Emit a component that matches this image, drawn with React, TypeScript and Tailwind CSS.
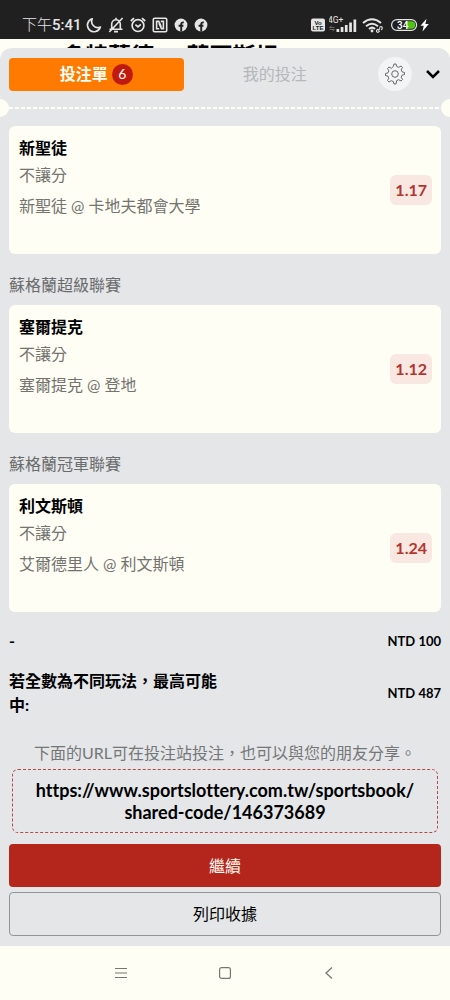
import React from "react";

type Bet = { league?: string; pick: string; market: string; match: string; odds: string };

const bets: Bet[] = [
  { pick: "新聖徒", market: "不讓分", match: "新聖徒 @ 卡地夫都會大學", odds: "1.17" },
  { league: "蘇格蘭超級聯賽", pick: "塞爾提克", market: "不讓分", match: "塞爾提克 @ 登地", odds: "1.12" },
  { league: "蘇格蘭冠軍聯賽", pick: "利文斯頓", market: "不讓分", match: "艾爾德里人 @ 利文斯頓", odds: "1.24" },
];

function FacebookIcon() {
  return (
    <svg className="size-3.5" viewBox="0 0 14 14" aria-hidden="true">
      <circle cx="7" cy="7" r="6.4" fill="#e6e6e6" />
      <path d="M7.2 13.5V6.2q0-2 2.6-1.800M4.600 7.800h4.800" fill="none" stroke="#202020" strokeWidth="1.9" />
    </svg>
  );
}

function StatusBar() {
  return (
    <header className="flex h-[39px] items-end justify-between bg-[#202020] pr-5 pb-1 pl-[22px] text-[#e6e6e6]">
      <div className="flex items-center gap-1.5">
        <span className="-mr-0.5 font-['Roboto','Noto_Sans_CJK_TC',sans-serif] text-[15px] leading-5 font-medium"><span className="font-light">下午</span>5:41</span>
        <svg className="size-4" viewBox="0 0 16 16" fill="none" stroke="currentColor" strokeWidth="1.7" strokeLinejoin="round" aria-hidden="true">
          <path d="M6.2 1.8A6.6 6.6 0 1 0 14.4 10 6.2 6.2 0 0 1 6.2 1.8Z" />
        </svg>
        <svg className="size-4" viewBox="0 0 16 16" fill="none" stroke="currentColor" strokeWidth="1.6" aria-hidden="true">
          <path d="M1.500 12.300h13M3.700 12V7a4.300 4.300 0 0 1 8.600 0v5M8 .800v2M6 14.600h4M14.600 1 1.300 15" />
        </svg>
        <svg className="size-4" viewBox="0 0 16 16" fill="none" stroke="currentColor" strokeWidth="1.7" aria-hidden="true">
          <circle cx="8" cy="8.6" r="5.9" />
          <path d="M.800 4 4 1.100M15.200 4 12 1.100M5.400 7.600 8 9.800l2.800-2.400" />
        </svg>
        <svg className="size-4" viewBox="0 0 16 16" fill="none" stroke="currentColor" strokeWidth="1.6" aria-hidden="true">
          <rect x="1.300" y="1.300" width="13.400" height="13.400" rx="1.200" />
          <path d="M7.200 11.800H4.600V4.400h2.200l2.500 5.400M8.800 4.400h2.600v7.200H9.500L6.900 6.200" />
        </svg>
        <FacebookIcon />
        <FacebookIcon />
      </div>
      <div className="flex items-center gap-1">
        <svg className="h-5 w-[15px]" viewBox="0 0 15 20" aria-hidden="true">
          <rect x="1" y="3.500" width="14" height="13" rx="2" fill="#e6e6e6" />
          <g fill="#202020" fontFamily="Liberation Sans" fontSize="6" fontWeight="700" textAnchor="middle">
            <text x="8" y="9.500">Vo</text>
            <text x="8" y="15">LTE</text>
          </g>
        </svg>
        <svg className="h-5 w-[29px]" viewBox="0 0 29 20" fill="#e6e6e6" aria-hidden="true">
          <text x="-1" y="8" fontFamily="Roboto" fontSize="8.500">4G+</text>
          <path d="M7.500 14h2.700v3H7.500zM11.700 12h2.700v5h-2.700zM15.900 10h2.700v7h-2.700zM20.200 7.500h2.700V17h-2.700zM24.500 4.500h2.700V17h-2.700z" />
          <path d="M.500 12.500h5M2.500 11l-2 1.500M5.500 14.500h-5M3.500 16l2-1.500" stroke="#888" strokeWidth=".7" />
        </svg>
        <svg className="h-5 w-[22px]" viewBox="0 0 22 20" fill="none" stroke="#e6e6e6" strokeWidth="2" aria-hidden="true">
          <path d="M1 8q9-7.500 18 0M4 11.200q6-5 12 0M7 14q3.200-2.800 6 0" />
          <circle cx="10" cy="16" r="1.400" fill="#e6e6e6" stroke="none" />
          <path d="m16 15.500 2-2M17.300 12.600l.8-.7q1.100-.7 1.900.2t0 1.900l-.9.900M16 14l-1.200 1.200q-.8.900.1 1.700t1.700 0L17.800 16" strokeWidth="1.100" />
        </svg>
        <svg className="h-5 w-[42px]" viewBox="0 0 42 20" aria-hidden="true">
          <rect x="3.600" y="4.600" width="25" height="10.800" rx="5.400" fill="none" stroke="#e6e6e6" strokeWidth="1.200" />
          <path d="M18.500 6.200h5a3.800 3.800 0 0 1 0 7.600h-5z" fill="#4fc414" />
          <text x="9" y="13.700" fill="#fff" fontFamily="Roboto" fontSize="10" fontWeight="500">34</text>
          <path d="m38.500 3.800-6 7h3.200l-1.200 5.700 6.300-7.500h-3.400z" fill="#fff" />
        </svg>
      </div>
    </header>
  );
}

function BetCard({ bet }: { bet: Bet }) {
  return (
    <section>
      {bet.league && <h2 className="pt-[19px] pb-2 text-base leading-6 text-[#6a6b6c]">{bet.league}</h2>}
      <article className="flex h-32 items-center justify-between rounded-md bg-[#fffef5] pr-[9px] pl-2.5">
        <div className="self-start pt-2">
          <h3 className="text-base leading-7 font-bold text-black">{bet.pick}</h3>
          <p className="text-base leading-[26px] text-[#73736f]">{bet.market}</p>
          <p className="pt-1 text-base leading-7 text-[#73736f]">{bet.match}</p>
        </div>
        <span className="rounded-md bg-[#f8e8e1] px-[5px] py-[3px] text-base leading-6 font-bold text-[#b23530]">{bet.odds}</span>
      </article>
    </section>
  );
}

export default function App() {
  return (
    <div className="flex min-h-screen flex-col bg-[#fffef5] font-['Lato','Noto_Sans_CJK_TC',sans-serif] text-black">
      <StatusBar />
      <div className="flex h-[9px] gap-3 overflow-hidden pl-[62px] text-[23px] leading-8 font-bold whitespace-nowrap">
        <span>多特蒙德</span>
        <span>-</span>
        <span>荷爾斯坦</span>
      </div>
      <main className="flex flex-col rounded-t-xl bg-[#e4e6e8] px-[9px] pt-[9px] pb-[10px]">
        <nav className="flex items-center">
          <button className="flex h-[33px] flex-1 items-center justify-center gap-1 rounded bg-[#ff7a00] text-base font-bold text-[#fffef5]">
            投注單
            <span className="flex size-[21px] items-center justify-center rounded-full bg-[#c01a10] text-sm font-normal">6</span>
          </button>
          <button className="ml-1 h-[33px] flex-1 text-base text-[#b5b7b9]">我的投注</button>
          <button aria-label="設定" className="ml-4 flex size-[34px] items-center justify-center rounded-full bg-[#f3f4f5]">
            <svg className="size-[22px]" viewBox="0 0 22 22" fill="none" stroke="#66686a" strokeWidth="1" strokeLinejoin="round" aria-hidden="true">
              <path d="M9.300 3.500 10 1h2l.7 2.500 2 .8 2.300-1.300 1.500 1.500-1.300 2.300.8 2 2.500.7v2l-2.500.7-.8 2 1.300 2.300-1.500 1.500-2.300-1.300-2 .8L12 21h-2l-.7-2.500-2-.8L5 19l-1.500-1.500 1.300-2.300-.8-2-2.500-.7v-2L4 9.800l.8-2-1.300-2.300L5 4l2.300 1.300Z" />
              <circle cx="11" cy="11" r="3.300" />
            </svg>
          </button>
          <button aria-label="收合" className="ml-[13px] flex h-[33px] w-4 items-center justify-center">
            <svg className="h-2.5 w-4" viewBox="0 0 16 10" fill="none" stroke="#000" strokeWidth="2.500" aria-hidden="true">
              <path d="m2 2 6 6 6-6" />
            </svg>
          </button>
        </nav>
        <div className="-mx-[9px] mt-2 flex h-[18px] items-center justify-between overflow-hidden" aria-hidden="true">
          <span className="h-[18px] w-[9px] rounded-r-full bg-[#fffef5]" />
          <span className="h-0.5 flex-1 bg-[repeating-linear-gradient(90deg,#fffef5_0_4px,transparent_4px_6px)]" />
          <span className="h-[18px] w-[9px] rounded-l-full bg-[#fffef5]" />
        </div>
        <div className="mt-[9px]">
          {bets.map((bet) => <BetCard key={bet.match} bet={bet} />)}
        </div>
        <dl className="text-base leading-6 font-bold">
          <div className="flex h-[57px] items-center justify-between">
            <dt>-</dt>
            <dd className="text-[13px]">NTD 100</dd>
          </div>
          <div className="flex items-center justify-between">
            <dt className="w-1/2">若全數為不同玩法，最高可能中:</dt>
            <dd className="text-[13px]">NTD 487</dd>
          </div>
        </dl>
        <p className="pt-6 pb-1 text-center text-base leading-6 text-[#747678]">下面的URL可在投注站投注，也可以與您的朋友分享。</p>
        <div className="mx-[3px] rounded-md border border-dashed border-[#b8474b] px-4 py-[9px] text-center text-lg leading-[22px] font-bold [font-variant-ligatures:none]">
          <a href="https://www.sportslottery.com.tw/sportsbook/shared-code/146373689">https://www.sportslottery.com.tw/sportsbook/<wbr />shared-code/146373689</a>
        </div>
        <button className="mt-[11px] h-[43px] rounded bg-[#b4261c] text-base text-[#fffef5]">繼續</button>
        <button className="mt-[5px] h-11 rounded border border-[#929497] text-base">列印收據</button>
      </main>
      <nav className="flex h-[54px] items-center justify-center gap-[88px] text-[#777671]">
        <button aria-label="最近使用" className="flex size-4 items-center justify-center">
          <svg className="size-3" viewBox="0 0 12 12" fill="none" stroke="currentColor" strokeWidth="1.200" aria-hidden="true"><path d="M0 1.500h12M0 6h12M0 10.500h12" /></svg>
        </button>
        <button aria-label="主畫面" className="flex size-4 items-center justify-center">
          <svg className="size-3" viewBox="0 0 12 12" fill="none" stroke="currentColor" strokeWidth="1.200" aria-hidden="true"><rect x=".6" y=".6" width="10.800" height="10.800" rx="2" /></svg>
        </button>
        <button aria-label="返回" className="flex size-4 items-center justify-center">
          <svg className="size-3" viewBox="0 0 12 12" fill="none" stroke="currentColor" strokeWidth="1.300" aria-hidden="true"><path d="M9 .5 3 6l6 5.500" /></svg>
        </button>
      </nav>
    </div>
  );
}
